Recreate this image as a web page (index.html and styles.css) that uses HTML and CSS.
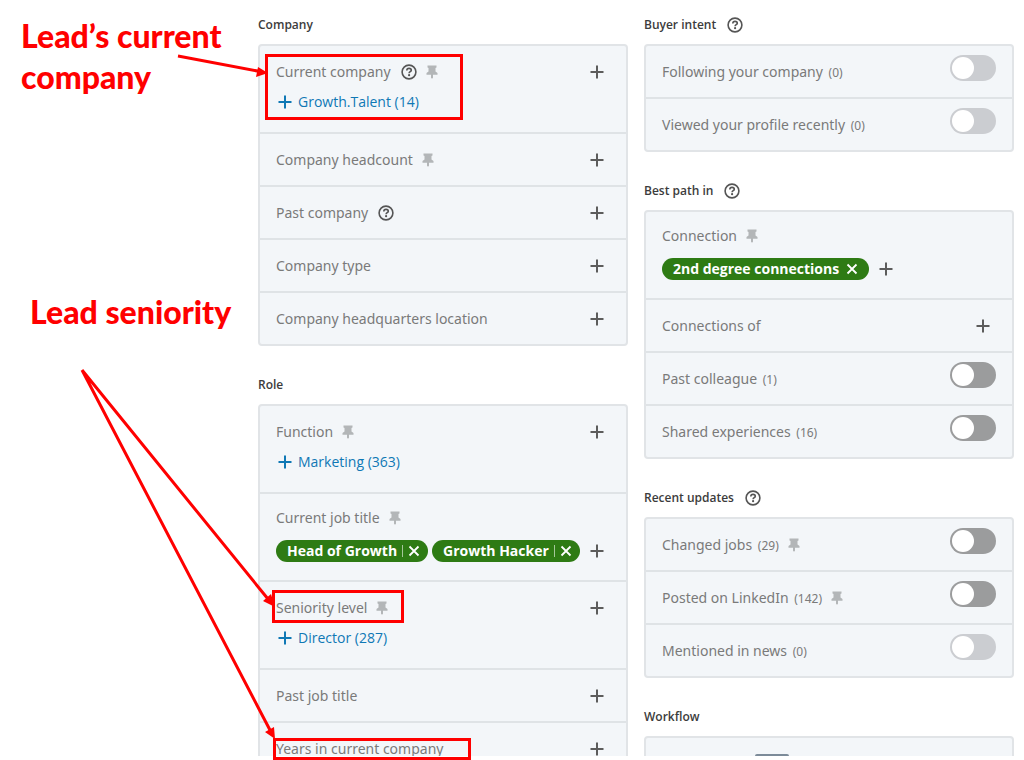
FILE: index.html
```html
<!DOCTYPE html>
<html lang="en">
<head>
<meta charset="UTF-8" />
<title>Lead filters</title>
<link rel="stylesheet" href="styles.css">
</head>
<body>

<svg class="sprite" aria-hidden="true">
  <symbol id="plus" viewBox="0 0 14 14"><path d="M7 0.5v13M0.5 7h13" fill="none" stroke="currentColor" stroke-width="2" /></symbol>
  <symbol id="cross" viewBox="0 0 12 12"><path d="M1.5 1.5l9 9M10.5 1.5l-9 9" fill="none" stroke="currentColor" stroke-width="1.8" /></symbol>
  <symbol id="pin" viewBox="0 0 12 14"><path d="M1.5 0.5h9v2l-1 0.500v3.500l2 1.500v1.800H7v3l-1 1-1-1V9.800H0.500V8l2-1.500V3l-1-0.500z" fill="currentColor" /></symbol>
  <symbol id="help" viewBox="0 0 16 16">
    <circle cx="8" cy="8" r="6.900" fill="none" stroke="currentColor" stroke-width="1.600" />
    <path d="M5.800 6.500C5.800 5.100 6.700 4.400 8 4.400s2.300 0.700 2.300 1.800c0 1.500-2.200 1.500-2.200 3" fill="none" stroke="currentColor" stroke-width="1.600" />
    <circle cx="8.100" cy="11.200" r="1.100" fill="currentColor" />
  </symbol>
</svg>

<div class="page">
  <aside class="notes">
    <p class="note">Lead’s current company</p>
    <p class="note note-seniority">Lead seniority</p>
  </aside>

  <main class="column">
    <section>
      <h2>Company</h2>
      <div class="card">
        <div class="row">
          <div class="line">
            <span class="label">Current company</span>
            <button class="help" aria-label="Help"><svg><use href="#help" /></svg></button>
            <svg class="pin"><use href="#pin" /></svg>
            <button class="add" aria-label="Add current company"><svg><use href="#plus" /></svg></button>
          </div>
          <button class="suggest"><svg><use href="#plus" /></svg>Growth.Talent (14)</button>
        </div>
        <div class="row">
          <div class="line">
            <span class="label">Company headcount</span>
            <svg class="pin"><use href="#pin" /></svg>
            <button class="add" aria-label="Add company headcount"><svg><use href="#plus" /></svg></button>
          </div>
        </div>
        <div class="row">
          <div class="line">
            <span class="label">Past company</span>
            <button class="help" aria-label="Help"><svg><use href="#help" /></svg></button>
            <button class="add" aria-label="Add past company"><svg><use href="#plus" /></svg></button>
          </div>
        </div>
        <div class="row">
          <div class="line">
            <span class="label">Company type</span>
            <button class="add" aria-label="Add company type"><svg><use href="#plus" /></svg></button>
          </div>
        </div>
        <div class="row">
          <div class="line">
            <span class="label">Company headquarters location</span>
            <button class="add" aria-label="Add company headquarters location"><svg><use href="#plus" /></svg></button>
          </div>
        </div>
      </div>
    </section>

    <section>
      <h2>Role</h2>
      <div class="card">
        <div class="row">
          <div class="line">
            <span class="label">Function</span>
            <svg class="pin"><use href="#pin" /></svg>
            <button class="add" aria-label="Add function"><svg><use href="#plus" /></svg></button>
          </div>
          <button class="suggest"><svg><use href="#plus" /></svg>Marketing (363)</button>
        </div>
        <div class="row row-chips">
          <div class="line">
            <span class="label">Current job title</span>
            <svg class="pin"><use href="#pin" /></svg>
          </div>
          <div class="chips">
            <button class="chip chip-split"><span>Head of Growth</span><svg><use href="#cross" /></svg></button>
            <button class="chip chip-split"><span>Growth Hacker</span><svg><use href="#cross" /></svg></button>
            <button class="add" aria-label="Add current job title"><svg><use href="#plus" /></svg></button>
          </div>
        </div>
        <div class="row">
          <div class="line">
            <span class="label">Seniority level</span>
            <svg class="pin"><use href="#pin" /></svg>
            <button class="add" aria-label="Add seniority level"><svg><use href="#plus" /></svg></button>
          </div>
          <button class="suggest"><svg><use href="#plus" /></svg>Director (287)</button>
        </div>
        <div class="row">
          <div class="line">
            <span class="label">Past job title</span>
            <button class="add" aria-label="Add past job title"><svg><use href="#plus" /></svg></button>
          </div>
        </div>
        <div class="row">
          <div class="line">
            <span class="label">Years in current company</span>
            <button class="add" aria-label="Add years in current company"><svg><use href="#plus" /></svg></button>
          </div>
        </div>
      </div>
    </section>
  </main>

  <div class="column">
    <section>
      <h2>Buyer intent <button class="help" aria-label="Help"><svg><use href="#help" /></svg></button></h2>
      <div class="card">
        <div class="row row-toggle">
          <label class="label" for="following">Following your company <small>(0)</small></label>
          <input type="checkbox" class="toggle" id="following" disabled />
        </div>
        <div class="row row-toggle">
          <label class="label" for="viewed">Viewed your profile recently <small>(0)</small></label>
          <input type="checkbox" class="toggle" id="viewed" disabled />
        </div>
      </div>
    </section>

    <section>
      <h2>Best path in <button class="help" aria-label="Help"><svg><use href="#help" /></svg></button></h2>
      <div class="card">
        <div class="row row-chips">
          <div class="line">
            <span class="label">Connection</span>
            <svg class="pin"><use href="#pin" /></svg>
          </div>
          <div class="chips">
            <button class="chip"><span>2nd degree connections</span><svg><use href="#cross" /></svg></button>
            <button class="add" aria-label="Add connection"><svg><use href="#plus" /></svg></button>
          </div>
        </div>
        <div class="row">
          <div class="line">
            <span class="label">Connections of</span>
            <button class="add" aria-label="Add connections of"><svg><use href="#plus" /></svg></button>
          </div>
        </div>
        <div class="row row-toggle">
          <label class="label" for="colleague">Past colleague <small>(1)</small></label>
          <input type="checkbox" class="toggle" id="colleague" />
        </div>
        <div class="row row-toggle">
          <label class="label" for="shared">Shared experiences <small>(16)</small></label>
          <input type="checkbox" class="toggle" id="shared" />
        </div>
      </div>
    </section>

    <section>
      <h2>Recent updates <button class="help" aria-label="Help"><svg><use href="#help" /></svg></button></h2>
      <div class="card">
        <div class="row row-toggle">
          <label class="label" for="changed">Changed jobs <small>(29)</small></label>
          <svg class="pin"><use href="#pin" /></svg>
          <input type="checkbox" class="toggle" id="changed" />
        </div>
        <div class="row row-toggle">
          <label class="label" for="posted">Posted on LinkedIn <small>(142)</small></label>
          <svg class="pin"><use href="#pin" /></svg>
          <input type="checkbox" class="toggle" id="posted" />
        </div>
        <div class="row row-toggle">
          <label class="label" for="news">Mentioned in news <small>(0)</small></label>
          <input type="checkbox" class="toggle" id="news" disabled />
        </div>
      </div>
    </section>

    <section>
      <h2>Workflow</h2>
      <div class="card">
        <div class="row"><div class="tag"></div></div>
      </div>
    </section>
  </div>
</div>

<!-- red boxes and arrows over the filters -->
<svg class="marks" width="1024" height="760" aria-hidden="true">
  <g fill="none" stroke="#ff0000" stroke-width="3">
    <rect x="266.500" y="55.500" width="195" height="63" />
    <rect x="273.500" y="591.500" width="129" height="30" />
    <rect x="274.500" y="739.500" width="195" height="19" />
    <path d="M178 56L260 71.500M82 370L268 599M82 370L271 732" />
  </g>
  <path d="M268 73l-12 4 2-10zM275 607l-12-6 8-7zM275 739l-10-7 9-5z" fill="#ff0000" />
</svg>

</body>
</html>
```
FILE: styles.css
```css
* { box-sizing: border-box; }
body { font-family: "Open Sans", "Noto Sans", sans-serif; font-size: 14px; line-height: 20px; background: #fff; color: #7a7a7a; margin: 0; }
button { font: inherit; background: none; border: none; padding: 0; color: inherit; cursor: pointer; }
.sprite { display: none; }

.page {
  display: grid; grid-template-columns: 242px minmax(0, 1fr) minmax(0, 1fr); gap: 16px;
  height: calc(100vh - 4px); padding: 6px 10px 0 0; overflow: hidden;
}
.notes { padding: 9px 0 0 21px; }
.note {
  font-family: Lato, sans-serif; font-size: 32px; line-height: 41px; font-weight: 900;
  color: #ff0000; margin: 0;
}
.note-seniority { margin: 194px 0 0 9px; }

section { margin-bottom: 20px; }
h2 {
  display: flex; align-items: center; gap: 11px; height: 38px; margin: 0;
  font-size: 12px; font-weight: 600; color: #3c3c3c;
}
.card { background: #f3f6f9; border: 2px solid #e1e4e7; border-radius: 4px; }
.row { padding: 16px 16px 15px; border-bottom: 2px solid #dfe3e6; }
.row:last-child { border-bottom: none; }
.line { display: flex; align-items: center; height: 20px; }
.label { font-family: "Noto Sans", sans-serif; white-space: nowrap; }
.label small { font-size: 12px; margin-left: 2px; }

.help { display: flex; color: #555; }
.help svg { width: 16px; height: 16px; }
.line .help { margin-left: 10px; }
.pin { width: 12px; height: 14px; margin-left: 9px; color: #b3b6b8; }
.add {
  display: flex; align-items: center; justify-content: center;
  width: 26px; height: 26px; color: #5c5c5c;
}
.add svg, .suggest svg { width: 14px; height: 14px; }
.line .add { margin-left: auto; }
.suggest { display: flex; align-items: center; gap: 6px; margin: 10px 0 5px 2px; color: #0f78b5; }

.row-chips { padding: 14px 16px 16px; }
.chips { display: flex; align-items: center; gap: 4px; margin-top: 10px; }
.chip {
  display: flex; align-items: center; gap: 7px; height: 22px; padding: 0 11px;
  border-radius: 11px; background: #2e7b14; color: #fff;
  font-size: 14px; font-weight: bold; white-space: nowrap;
}
.chip svg { width: 12px; height: 12px; }
.chip-split { gap: 5px; padding-right: 8px; }
.chip-split svg { width: 18px; padding-left: 5px; border-left: 1px solid #a5c79a; }

.row-toggle { display: flex; align-items: center; height: 53px; padding: 1px 16px 0; }
.row-toggle:last-child { height: 51px; }
.toggle {
  appearance: none; width: 46px; height: 26px; margin: 0 0 8px auto; padding: 2px;
  border-radius: 13px; background: #9b9c9d; cursor: pointer;
}
.toggle::before { content: ""; display: block; width: 22px; height: 22px; border-radius: 50%; background: #fff; }
.toggle:disabled { background: #cbcdd1; cursor: default; }
.toggle:checked::before { margin-left: auto; }

.tag { width: 34px; height: 20px; margin-left: 93px; border-radius: 2px; background: #7c8b99; }

.marks { position: absolute; top: 0; left: 0; pointer-events: none; }
```
